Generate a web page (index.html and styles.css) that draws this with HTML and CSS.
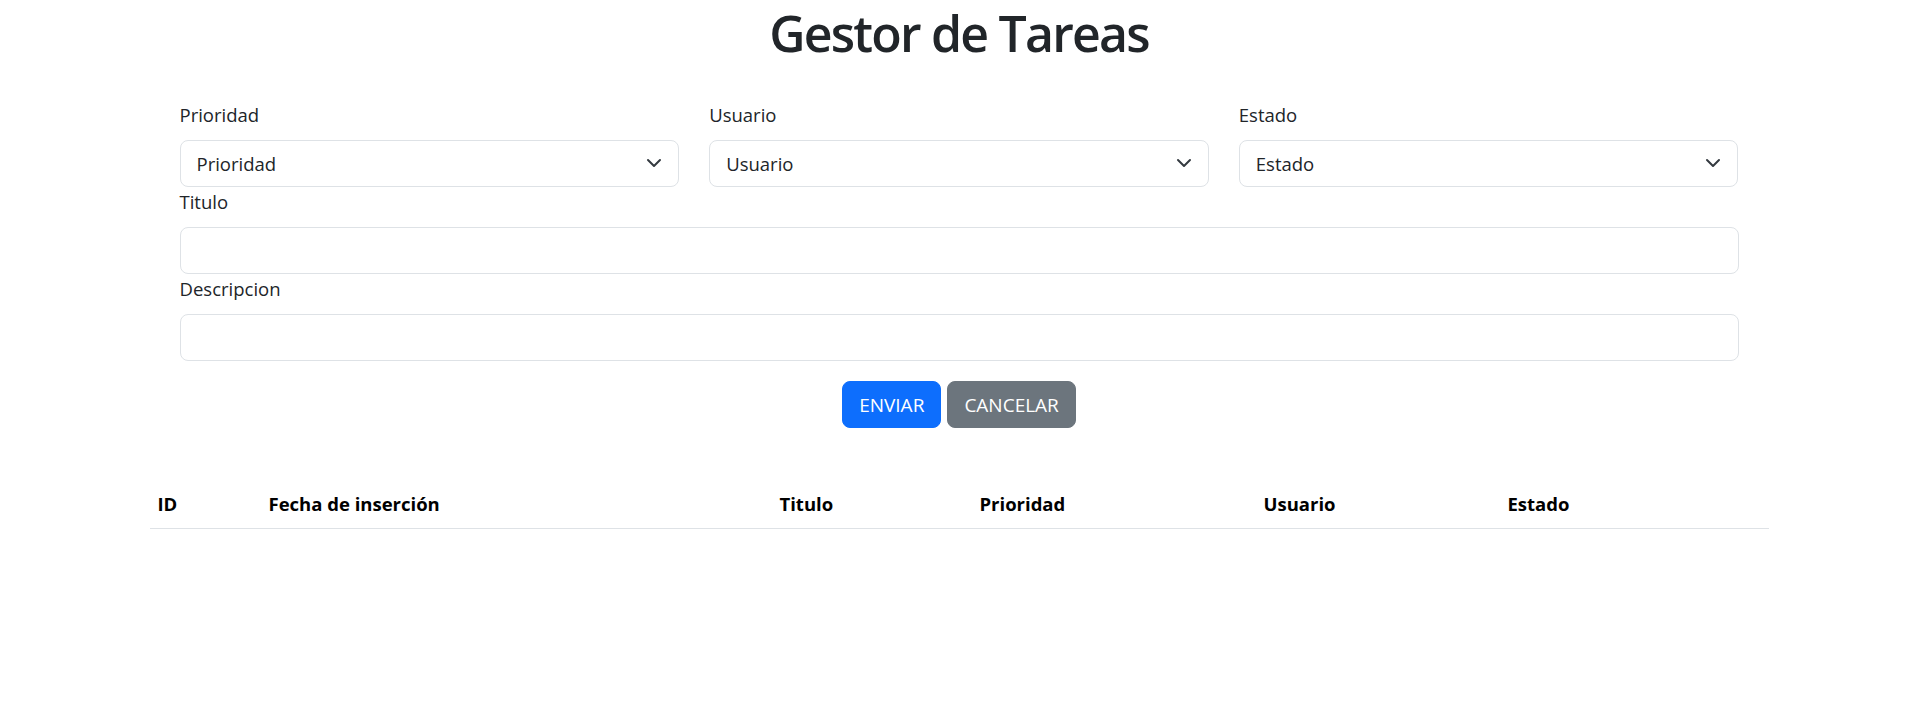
FILE: index.html
```html
<!DOCTYPE html>
<html lang="es">
<head>
<meta charset="utf-8">
<title>Gestor de Tareas</title>
<link rel="stylesheet" href="styles.css">
</head>
<body>
<main class="page">
  <h1 class="title">Gestor de Tareas</h1>
  <form class="task-form">
    <div class="row-3">
      <div class="field">
        <label class="label" for="prioridad">Prioridad</label>
        <div class="select-wrap">
          <select id="prioridad" class="control select"><option>Prioridad</option></select>
          <svg class="chevron" viewBox="0 0 16 16" aria-hidden="true"><path d="m2 5 6 6 6-6"/></svg>
        </div>
      </div>
      <div class="field">
        <label class="label" for="usuario">Usuario</label>
        <div class="select-wrap">
          <select id="usuario" class="control select"><option>Usuario</option></select>
          <svg class="chevron" viewBox="0 0 16 16" aria-hidden="true"><path d="m2 5 6 6 6-6"/></svg>
        </div>
      </div>
      <div class="field">
        <label class="label" for="estado">Estado</label>
        <div class="select-wrap">
          <select id="estado" class="control select"><option>Estado</option></select>
          <svg class="chevron" viewBox="0 0 16 16" aria-hidden="true"><path d="m2 5 6 6 6-6"/></svg>
        </div>
      </div>
    </div>
    <div class="field">
      <label class="label" for="titulo">Titulo</label>
      <input id="titulo" class="control" type="text">
    </div>
    <div class="field">
      <label class="label" for="descripcion">Descripcion</label>
      <input id="descripcion" class="control" type="text">
    </div>
    <div class="actions">
      <button type="button" class="btn btn-primary">ENVIAR</button>
      <button type="button" class="btn btn-secondary">CANCELAR</button>
    </div>
  </form>
  <table class="tasks">
    <colgroup>
      <col class="c-id">
      <col class="c-fecha">
      <col class="c-titulo">
      <col class="c-prioridad">
      <col class="c-usuario">
      <col class="c-estado">
    </colgroup>
    <thead>
      <tr>
        <th>ID</th>
        <th>Fecha de inserción</th>
        <th>Titulo</th>
        <th>Prioridad</th>
        <th>Usuario</th>
        <th>Estado</th>
      </tr>
    </thead>
    <tbody></tbody>
  </table>
</main>
</body>
</html>
```

FILE: styles.css
```css
html, body {
  margin: 0;
  padding: 0;
  background: #ffffff;
}

body {
  font-family: "Open Sans", "Noto Sans", sans-serif;
  color: #212529;
}

.page {
  width: 1619px;
  margin: 0 auto;
}

.title {
  margin: 0;
  text-align: center;
  font-size: 50px;
  font-weight: 600;
  line-height: 66px;
  letter-spacing: -1.8px;
  color: #212529;
}

.task-form {
  padding: 34px 30px 0;
}

.row-3 {
  display: grid;
  grid-template-columns: repeat(3, 1fr);
  column-gap: 30px;
}

.label {
  display: block;
  font-size: 18.5px;
  line-height: 30px;
  margin-bottom: 10px;
  color: #212529;
}

.control {
  display: block;
  width: 100%;
  box-sizing: border-box;
  height: 47px;
  margin: 0;
  padding: 0 16px;
  font-family: inherit;
  font-size: 18.5px;
  color: #212529;
  background: #ffffff;
  border: 1px solid #dee2e6;
  border-radius: 8px;
  outline: none;
  -webkit-appearance: none;
  appearance: none;
}

.select {
  padding-right: 48px;
}

.select-wrap {
  position: relative;
}

.chevron {
  position: absolute;
  right: 17px;
  top: 50%;
  width: 16px;
  height: 16px;
  margin-top: -9px;
  fill: none;
  stroke: #343a40;
  stroke-width: 2;
  stroke-linecap: round;
  stroke-linejoin: round;
  pointer-events: none;
}

.actions {
  display: flex;
  justify-content: center;
  gap: 6px;
  margin-top: 20px;
}

.btn {
  height: 47px;
  padding: 0 16px;
  font-family: inherit;
  font-size: 19px;
  color: #ffffff;
  border-radius: 8px;
  cursor: pointer;
}

.btn-primary {
  background: #0d6efd;
  border: 1px solid #0d6efd;
}

.btn-secondary {
  background: #6c757d;
  border: 1px solid #6c757d;
}

.tasks {
  width: 100%;
  margin-top: 59px;
  border-collapse: collapse;
  table-layout: fixed;
}

.c-id { width: 111px; }
.c-fecha { width: 511px; }
.c-titulo { width: 200px; }
.c-prioridad { width: 284px; }
.c-usuario { width: 244px; }
.c-estado { width: 269px; }

.tasks th {
  text-align: left;
  padding: 4px 8px 12px;
  font-size: 18.5px;
  font-weight: 700;
  line-height: 25px;
  color: #000000;
  border-bottom: 1px solid #dee2e6;
  white-space: nowrap;
}
```
